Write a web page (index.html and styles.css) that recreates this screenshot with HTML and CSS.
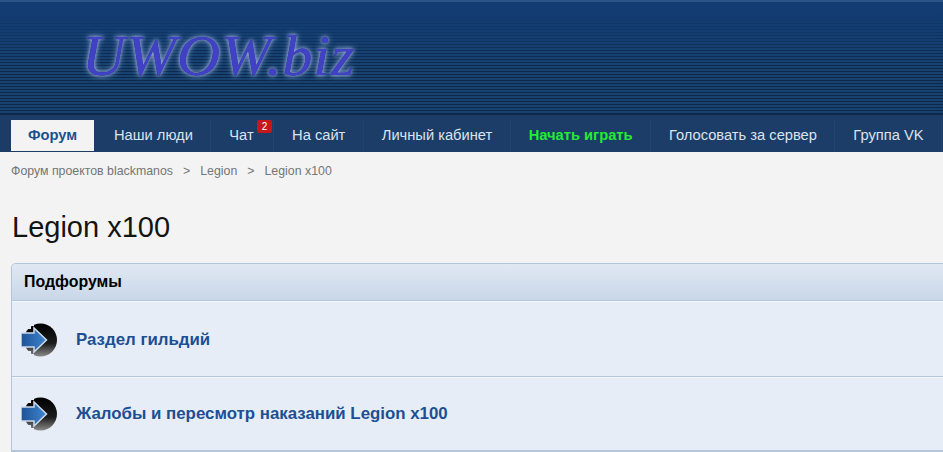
FILE: index.html
```html
<!DOCTYPE html>
<html lang="ru">
<head>
    <meta charset="UTF-8">
    <title>Legion x100</title>
    <link rel="stylesheet" href="styles.css">
</head>
<body>
    <header class="header">
        <div class="logo">UWOW.biz</div>
    </header>

    <nav class="navbar">
        <a class="tab selected">Форум</a>
        <a class="tab">Наши люди</a>
        <a class="tab tab-chat">Чат<span class="badge">2</span></a>
        <a class="tab">На сайт</a>
        <a class="tab">Личный кабинет</a>
        <a class="tab tab-play">Начать играть</a>
        <a class="tab">Голосовать за сервер</a>
        <a class="tab">Группа VK</a>
    </nav>

    <main class="content">
        <div class="crumbs">
            <span>Форум проектов blackmanos</span>
            <span class="sep">&gt;</span>
            <span>Legion</span>
            <span class="sep">&gt;</span>
            <span>Legion x100</span>
        </div>

        <h1 class="title">Legion x100</h1>

        <section class="block">
            <h2 class="block-head">Подфорумы</h2>
            <div class="row">
                <svg class="arrow" viewBox="0 0 36 34" width="36" height="34">
                    <use href="#node-icon"></use>
                </svg>
                <a class="row-link">Раздел гильдий</a>
            </div>
            <div class="row">
                <svg class="arrow" viewBox="0 0 36 34" width="36" height="34">
                    <use href="#node-icon"></use>
                </svg>
                <a class="row-link">Жалобы и пересмотр наказаний Legion x100</a>
            </div>
        </section>
    </main>

    <svg class="defs" width="0" height="0">
        <defs>
            <linearGradient id="disc" x1="0" y1="0" x2="0" y2="1">
                <stop offset="0" stop-color="#000"/>
                <stop offset="0.6" stop-color="#1c1c1c"/>
                <stop offset="1" stop-color="#8a8a8a"/>
            </linearGradient>
            <linearGradient id="shaft" x1="0" y1="0" x2="1" y2="0">
                <stop offset="0" stop-color="#1d5296"/>
                <stop offset="1" stop-color="#3f86cf"/>
            </linearGradient>
            <g id="node-icon">
                <circle cx="19.500" cy="17" r="16.500" fill="url(#disc)"/>
                <path d="M0 0H13V3H10V6H0ZM0 28H10V31H13V34H0Z" fill="#e7edf6"/>
                <path d="M0 10H13V5L25.500 17L13 29V24H0Z" fill="url(#shaft)" stroke="#cfdcec" stroke-width="1.500"/>
            </g>
        </defs>
    </svg>
</body>
</html>
```

FILE: styles.css
```css
* {
    margin: 0;
    padding: 0;
    box-sizing: border-box;
}

html, body {
    height: 452px;
    overflow: hidden;
}

body {
    background: #f3f3f3;
    color: #141414;
    font-family: "Liberation Sans", Arial, sans-serif;
}

/* шапка */
.header {
    height: 115px;
    padding: 26px 0 0 82px;
    border-top: 2px solid #2b5587;
    border-bottom: 1px solid #0c2747;
    background-color: #17426f;
    background-image:
        linear-gradient(180deg, #123c72 0, #123c72 8%, rgba(18, 60, 114, 0) 60%),
        repeating-linear-gradient(180deg, rgba(6, 22, 50, 0.6) 0, rgba(6, 22, 50, 0.6) 1px, transparent 1px, transparent 3px);
}

.logo {
    width: 300px;
    font-family: "Liberation Serif", serif;
    font-style: italic;
    font-size: 58px;
    line-height: 56px;
    letter-spacing: 1px;
    white-space: nowrap;
    color: #4141c6;
    transform-origin: left center;
    transform: scaleX(1.03);
    text-shadow: 0 0 1px #14146a, 0 0 6px #a9c2f0, 0 0 3px #a9c2f0;
}

/* меню */
.navbar {
    display: flex;
    height: 37px;
    padding: 5px 0 0 11px;
    background: #1b3c66;
    gap: 1px;
}

.tab {
    display: flex;
    align-items: center;
    position: relative;
    padding: 0 17.400px 2px 17px;
    height: 32px;
    background: #1c3d68;
    border-right: 1px solid #21436f;
    color: #dbe3ee;
    font-size: 14.700px;
    white-space: nowrap;
}

.tab.selected {
    justify-content: center;
    width: 83px;
    height: 31px;
    margin-right: 2px;
    padding: 0 0 1px;
    background: #f3f3f3;
    border-right: 0;
    color: #1c5190;
    font-weight: bold;
}

.tab-chat {
    padding-right: 19.400px;
}

.tab-play {
    color: #20ee32;
    font-weight: bold;
}

.badge {
    position: absolute;
    top: 0;
    right: 1px;
    width: 15px;
    height: 13px;
    background: #c8161d;
    border-radius: 2px;
    color: #fff;
    font-size: 10px;
    line-height: 13px;
    text-align: center;
}

/* контент */
.content {
    padding: 12px 0 0 11px;
}

.crumbs {
    display: flex;
    gap: 10px;
    height: 14px;
    color: #757575;
    font-size: 12.350px;
    line-height: 14px;
}

.title {
    margin-top: 32px;
    padding-left: 1px;
    font-size: 29px;
    font-weight: normal;
    line-height: 34px;
}

.block {
    margin-top: 19px;
    width: 940px;
    background: #e7edf6;
    border: 1px solid #b4c6db;
    border-right: 0;
    border-radius: 5px 0 0 0;
}

.block-head {
    height: 37px;
    padding-left: 12px;
    background: linear-gradient(180deg, #e0e8f3, #c9d7e8);
    border-radius: 4px 0 0 0;
    border-bottom: 1px solid #b4c6db;
    color: #000;
    font-size: 15.900px;
    line-height: 36px;
}

.row {
    display: flex;
    align-items: center;
    height: 74px;
    padding-left: 9px;
    border-top: 1px solid #f4f7fb;
    border-bottom: 1px solid #b4c6db;
}

.block-head + .row {
    height: 76px;
    padding-top: 1px;
}

.arrow {
    flex: none;
}

.row-link {
    margin-left: 19px;
    color: #1c4f93;
    font-size: 16.850px;
    font-weight: bold;
}

.defs {
    position: absolute;
}
```
